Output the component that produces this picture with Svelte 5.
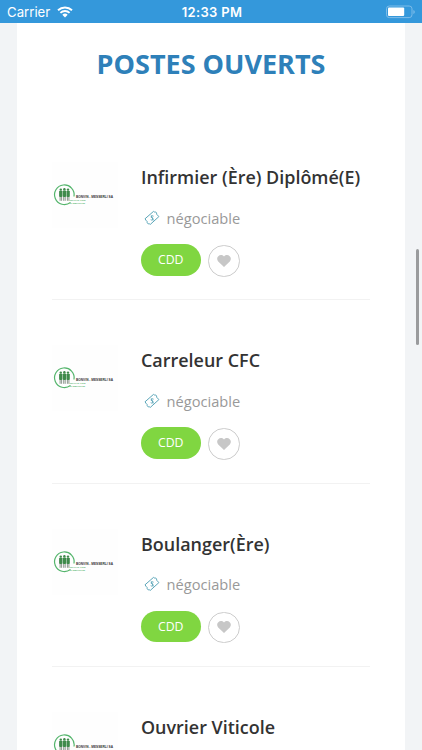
<script lang="ts">
    interface Job {
        title: string;
        salary: string;
        contract: string;
    }

    const jobs: Job[] = [
        { title: 'Infirmier (Ère) Diplômé(E)', salary: 'négociable', contract: 'CDD' },
        { title: 'Carreleur CFC', salary: 'négociable', contract: 'CDD' },
        { title: 'Boulanger(Ère)', salary: 'négociable', contract: 'CDD' },
        { title: 'Ouvrier Viticole', salary: 'négociable', contract: 'CDD' }
    ];
</script>

<div class="screen">
    <header class="status-bar">
        <div class="carrier">
            <span>Carrier</span>
            <svg class="wifi" viewBox="0 0 16 12" width="16" height="12">
                <path d="M1 4.3a10.2 10.2 0 0 1 14 0M3.4 6.9a6.7 6.7 0 0 1 9.2 0" fill="none" stroke="#fff" stroke-width="1.9" />
                <path d="M5.3 8.7a4 4 0 0 1 5.4 0L8 11.6z" fill="#fff" />
            </svg>
        </div>
        <div class="time">12:33 PM</div>
        <svg class="battery" viewBox="0 0 30 14" width="30" height="14">
            <rect x="1.5" y="1" width="25.5" height="11.6" rx="2.8" fill="none" stroke="#7dbce9" />
            <rect x="3" y="2.5" width="16.2" height="8.6" rx="1" fill="#fff" />
            <path d="M28.4 5v4q1.4-.5 1.4-2t-1.4-2z" fill="#7dbce9" />
        </svg>
    </header>

    <main class="card">
        <h1>POSTES OUVERTS</h1>
        {#each jobs as job}
            <article class="job">
                <svg class="logo" viewBox="0 0 66 66" width="66" height="66">
                    <rect width="66" height="66" fill="#fefefe" />
                    <path d="M18.5 40.4A9.8 9.8 0 1 1 22 34.5" fill="none" stroke="#54b56c" stroke-width="1.2" />
                    <g fill="#3f8a4b">
                        <circle cx="8.8" cy="27.6" r="1.2" />
                        <circle cx="12.4" cy="27.2" r="1.2" />
                        <circle cx="16" cy="27.6" r="1.2" />
                        <rect x="7.1" y="28.8" width="3.3" height="6.2" rx="0.8" />
                        <rect x="10.8" y="28.4" width="3.3" height="6.6" rx="0.8" />
                        <rect x="14.5" y="28.8" width="3.3" height="6.2" rx="0.8" />
                    </g>
                    <path d="M8.1 35v3.8M9.6 35v3.8M11.7 35v3.8M13.2 35v3.8M15.4 35v3.8M16.9 35v3.8" stroke="#5b6b5e" stroke-width="0.7" />
                    <text x="24" y="35.6" textLength="37" lengthAdjust="spacingAndGlyphs" class="brand">BONVIN - MESSERLI SA</text>
                    <text x="17.5" y="39" textLength="16" lengthAdjust="spacingAndGlyphs" class="tagline">TRAVAIL FIXE</text>
                    <text x="17.5" y="41.5" textLength="15.5" lengthAdjust="spacingAndGlyphs" class="tagline">ET TEMPORAIRE</text>
                </svg>
                <div class="details">
                    <h2>{job.title}</h2>
                    <div class="salary">
                        <svg viewBox="0 0 16 16" width="16" height="16" fill="none" stroke="#5ba6b9" stroke-width="1">
                            <path d="M1 8.8 9.5 1.4q.9 1 2.1.5l1 1.2q-.4 1.2.7 1.8l1.6 1.7-8.6 7.8q-1-1-2.1-.5l-1-1.2q.4-1.2-.8-1.9z" />
                            <path d="M9.6 6.2q-1.3-1-2.3 0-.8 1.2.7 1.7 1.7.4 1 1.7-1 1.1-2.3.1M7.3 5.4l2 5" stroke-width="0.9" />
                        </svg>
                        <span>{job.salary}</span>
                    </div>
                    <div class="actions">
                        <span class="contract">{job.contract}</span>
                        <button class="favorite" aria-label="Favori">
                            <svg viewBox="0 0 14 12" width="14" height="12">
                                <path d="M7 12 1.2 6.4C-2.2 2.6 3.4-2.5 7 1.5c3.6-4 9.2 1.1 5.8 4.9z" fill="#c7c7c7" />
                            </svg>
                        </button>
                    </div>
                </div>
            </article>
        {/each}
    </main>
    <div class="scrollbar"></div>
</div>

<style>
    :global(body) {
        margin: 0;
        overflow: hidden;
    }

    .screen {
        position: relative;
        height: 750px;
        overflow: hidden;
        background: #f2f4f6;
        font-family: "Open Sans", sans-serif;
    }

    .status-bar {
        box-sizing: border-box;
        display: grid;
        grid-template-columns: 1fr auto 1fr;
        align-items: center;
        height: 23px;
        padding: 1px 7px 0;
        background: #3498db;
        color: #fff;
        font-family: Inter, sans-serif;
        font-size: 13.2px;
    }

    .carrier {
        display: flex;
        align-items: center;
        gap: 7px;
    }

    .time {
        padding-left: 2px;
        font-weight: 600;
        font-size: 13px;
        letter-spacing: 0.35px;
    }

    .battery {
        justify-self: end;
    }

    .card {
        margin: 0 17px;
        padding: 0 35px;
        background: #fff;
    }

    h1 {
        box-sizing: border-box;
        height: 94px;
        margin: 0;
        padding-top: 21px;
        color: #2e80b9;
        font-size: 27px;
        font-weight: 700;
        line-height: 40px;
        text-align: center;
        white-space: nowrap;
    }

    .job {
        box-sizing: border-box;
        display: flex;
        gap: 23px;
        height: 183.3px;
        border-bottom: 1px solid #f2f2f2;
    }

    .logo {
        flex: none;
        margin-top: 45px;
    }

    .details {
        padding-top: 46px;
    }

    h2 {
        margin: 0;
        color: #333;
        font-size: 17.95px;
        font-weight: 600;
        line-height: 28px;
        white-space: nowrap;
    }

    .salary {
        display: flex;
        align-items: center;
        gap: 6.5px;
        height: 24px;
        margin-top: 14.5px;
        padding-left: 3px;
        color: #999;
        font-size: 14.65px;
    }

    .actions {
        display: flex;
        gap: 8px;
        margin-top: 14.5px;
    }

    .contract {
        width: 59.5px;
        height: 31.5px;
        border-radius: 16px;
        background: #80d641;
        color: #fff;
        font-size: 12.3px;
        line-height: 31.5px;
        text-align: center;
    }

    .favorite {
        box-sizing: border-box;
        display: flex;
        align-items: center;
        justify-content: center;
        width: 31.5px;
        height: 31.5px;
        margin-top: 1px;
        margin-left: -0.5px;
        padding: 0;
        border: 1px solid #ccc;
        border-radius: 50%;
        background: #fff;
    }

    .brand {
        fill: #333;
        font-family: "Liberation Sans", sans-serif;
        font-size: 3.7px;
        font-weight: 700;
    }

    .tagline {
        fill: #4fae66;
        font-family: "Liberation Sans", sans-serif;
        font-size: 2.5px;
        font-weight: 700;
    }

    .scrollbar {
        position: absolute;
        top: 249px;
        right: 3px;
        width: 3px;
        height: 96px;
        border-radius: 2px;
        background: #9a9b9d;
    }
</style>
